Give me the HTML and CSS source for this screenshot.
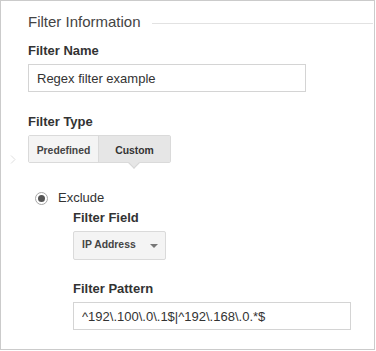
FILE: index.html
```html
<!DOCTYPE html>
<html lang="en">

<head>
  <meta charset="UTF-8">
  <meta name="viewport" content="width=device-width, initial-scale=1.0">
  <title>Filter Information</title>
  <link rel="stylesheet" href="styles.css">
</head>

<body>
  <div class="panel">
    <div class="section-head">
      <h2>Filter Information</h2>
      <div class="section-rule"></div>
    </div>

    <label class="field-label" for="filter-name">Filter Name</label>
    <input type="text" id="filter-name" class="text-input" value="Regex filter example">

    <div class="field-label">Filter Type</div>
    <div class="toggle">
      <button class="toggle-btn predefined">Predefined</button>
      <button class="toggle-btn custom active">Custom<span class="pointer"></span></button>
    </div>

    <!-- little expander chevron on the left edge -->
    <svg class="chevron" width="6" height="9" viewBox="0 0 6 9">
      <polyline points="1,0.5 5,4.5 1,8.5" fill="none" stroke="#dedede" stroke-width="1"/>
    </svg>

    <div class="radio-row">
      <span class="radio"><span class="radio-dot"></span></span>
      <span class="radio-text">Exclude</span>
    </div>

    <div class="custom-fields">
      <div class="field-label sub">Filter Field</div>
      <div class="select">
        <span>IP Address</span>
        <span class="caret"></span>
      </div>

      <label class="field-label gap" for="filter-pattern">Filter Pattern</label>
      <input type="text" id="filter-pattern" class="text-input" value="^192\.100\.0\.1$|^192\.168\.0.*$">
    </div>
  </div>
</body>

</html>
```

FILE: styles.css
```css
body,
html {
  margin: 0;
  padding: 0;
  background-color: #fff;
  font-family: "Liberation Sans", Arial, sans-serif;
}

.panel {
  position: relative;
  width: 375px;
  height: 350px;
  box-sizing: border-box;
  border: 1px solid #cbcbcb;
  padding: 12px 0 0 27px;
}

.section-head {
  display: flex;
  align-items: center;
}

.section-head h2 {
  margin: 0;
  font-size: 15px;
  line-height: 18px;
  font-weight: normal;
  color: #444;
}

.section-rule {
  flex: 1;
  height: 1px;
  margin: 3px 1px 0 11px;
  background-color: #e2e2e2;
}

.field-label {
  display: block;
  margin: 12px 0 5px;
  font-size: 13px;
  line-height: 16px;
  font-weight: bold;
  color: #333;
}

.text-input {
  display: block;
  width: 278px;
  height: 28px;
  box-sizing: border-box;
  margin: 0;
  padding: 0 8px;
  border: 1px solid #d4d4d4;
  border-radius: 0;
  font-family: inherit;
  font-size: 13px;
  color: #333;
  outline: none;
}

#filter-name + .field-label {
  margin-top: 22px;
}

.toggle {
  display: flex;
  width: 143px;
  height: 28px;
  box-sizing: border-box;
  border: 1px solid #dadada;
  border-radius: 2px;
}

.toggle-btn {
  position: relative;
  margin: 0;
  padding: 3px 0 0;
  border: 0;
  border-radius: 0;
  font-family: inherit;
  font-size: 10.4px;
  line-height: 23px;
  font-weight: bold;
  color: #444;
  background-color: #f4f4f4;
  text-align: center;
}

.toggle-btn.predefined {
  width: 70px;
  border-right: 1px solid #dadada;
}

.toggle-btn.custom {
  width: 71px;
}

.toggle-btn.active {
  background-color: #e6e6e6;
  color: #333;
}

.pointer {
  position: absolute;
  left: 31px;
  bottom: -5px;
  width: 7px;
  height: 7px;
  background-color: #e6e6e6;
  border-right: 1px solid #d6d6d6;
  border-bottom: 1px solid #d6d6d6;
  transform: rotate(45deg);
}

.chevron {
  position: absolute;
  left: 9px;
  top: 154px;
}

.radio-row {
  display: flex;
  align-items: center;
  margin: 27px 0 0 7px;
  height: 16px;
}

.radio {
  display: flex;
  align-items: center;
  justify-content: center;
  width: 13px;
  height: 13px;
  box-sizing: border-box;
  border: 1px solid #a8a8a8;
  border-radius: 50%;
  background-color: #fff;
}

.radio-dot {
  width: 7px;
  height: 7px;
  border-radius: 50%;
  background-color: #555;
}

.radio-text {
  margin-left: 10px;
  font-size: 13px;
  line-height: 16px;
  color: #333;
}

.custom-fields {
  margin-left: 45px;
}

.field-label.sub {
  margin-top: 4px;
}

.field-label.gap {
  margin-top: 21px;
}

.select {
  display: flex;
  align-items: center;
  width: 93px;
  height: 29px;
  box-sizing: border-box;
  padding: 0 0 2px 8px;
  border: 1px solid #dadada;
  border-radius: 2px;
  background-color: #f4f4f4;
  font-size: 10.4px;
  line-height: 25px;
  font-weight: bold;
  color: #444;
}

.caret {
  margin: 2px 0 0 14px;
  width: 0;
  height: 0;
  border-left: 4px solid transparent;
  border-right: 4px solid transparent;
  border-top: 4px solid #777;
}
```
